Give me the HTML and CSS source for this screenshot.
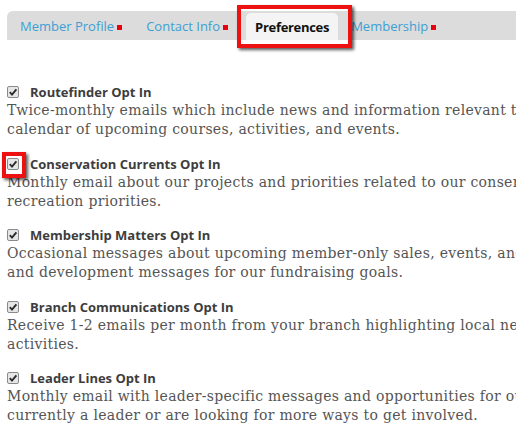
FILE: index.html
```html
<!DOCTYPE html>
<html>
<head>
<meta charset="utf-8">
<link rel="stylesheet" href="styles.css">
</head>
<body>
<div class="page">
  <nav class="tabs">
    <a class="tab tab-first">Member Profile<span class="req"></span></a>
    <a class="tab">Contact Info<span class="req"></span></a>
    <a class="tab tab-active">Preferences</a>
    <a class="tab tab-last">Membership<span class="req"></span></a>
  </nav>
  <div class="mark mark-tab"></div>

  <div class="prefs">
    <div class="pref">
      <div class="pref-head"><span class="cb"><svg viewBox="0 0 12 12" width="12" height="12"><rect x="0.5" y="0.5" width="11" height="11" rx="1.5" fill="#e6e6e6" stroke="#8a8a8a"/><path d="M2.8 6.2 L5 8.6 L9.4 3.4" fill="none" stroke="#2b2b2b" stroke-width="1.9"/></svg></span><span class="pref-title">Routefinder Opt In</span></div>
      <p class="pref-desc">Twice-monthly emails which include news and information relevant to you<br>calendar of upcoming courses, activities, and events.</p>
    </div>
    <div class="pref">
      <div class="pref-head"><span class="cb"><svg viewBox="0 0 12 12" width="12" height="12"><rect x="0.5" y="0.5" width="11" height="11" rx="1.5" fill="#e6e6e6" stroke="#8a8a8a"/><path d="M2.8 6.2 L5 8.6 L9.4 3.4" fill="none" stroke="#2b2b2b" stroke-width="1.9"/></svg><span class="mark mark-cb"></span></span><span class="pref-title">Conservation Currents Opt In</span></div>
      <p class="pref-desc">Monthly email about our projects and priorities related to our conservation<br>recreation priorities.</p>
    </div>
    <div class="pref">
      <div class="pref-head"><span class="cb"><svg viewBox="0 0 12 12" width="12" height="12"><rect x="0.5" y="0.5" width="11" height="11" rx="1.5" fill="#e6e6e6" stroke="#8a8a8a"/><path d="M2.8 6.2 L5 8.6 L9.4 3.4" fill="none" stroke="#2b2b2b" stroke-width="1.9"/></svg></span><span class="pref-title">Membership Matters Opt In</span></div>
      <p class="pref-desc">Occasional messages about upcoming member-only sales, events, and other<br>and development messages for our fundraising goals.</p>
    </div>
    <div class="pref">
      <div class="pref-head"><span class="cb"><svg viewBox="0 0 12 12" width="12" height="12"><rect x="0.5" y="0.5" width="11" height="11" rx="1.5" fill="#e6e6e6" stroke="#8a8a8a"/><path d="M2.8 6.2 L5 8.6 L9.4 3.4" fill="none" stroke="#2b2b2b" stroke-width="1.9"/></svg></span><span class="pref-title">Branch Communications Opt In</span></div>
      <p class="pref-desc">Receive 1-2 emails per month from your branch highlighting local news<br>activities.</p>
    </div>
    <div class="pref">
      <div class="pref-head"><span class="cb"><svg viewBox="0 0 12 12" width="12" height="12"><rect x="0.5" y="0.5" width="11" height="11" rx="1.5" fill="#e6e6e6" stroke="#8a8a8a"/><path d="M2.8 6.2 L5 8.6 L9.4 3.4" fill="none" stroke="#2b2b2b" stroke-width="1.9"/></svg></span><span class="pref-title">Leader Lines Opt In</span></div>
      <p class="pref-desc">Monthly email with leader-specific messages and opportunities for our<br>currently a leader or are looking for more ways to get involved.</p>
    </div>
  </div>
</div>
</body>
</html>
```
FILE: styles.css
```css
html, body {
  margin: 0;
  padding: 0;
  background: #fff;
}
body {
  overflow: hidden;
}
.page {
  position: relative;
  width: 509px;
  padding: 11px 0 0 7px;
}
.tabs {
  display: flex;
  align-items: stretch;
  height: 29px;
  background: #dcdcdc;
  border-top-left-radius: 6px;
  font-family: "Open Sans", "DejaVu Sans", sans-serif;
  font-size: 13px;
}
.tab {
  display: flex;
  align-items: center;
  padding: 0 12px;
  color: #3d9fd3;
  text-decoration: none;
  white-space: nowrap;
}
.tab-first { padding-left: 13px; }
.tab-active {
  margin: 2px 0 0 6px;
  padding: 0 9px;
  background: #f4f4f4;
  border-radius: 5px 5px 0 0;
  color: #111;
  font-weight: 700;
  letter-spacing: -0.3px;
}
.tab-last { padding-left: 13px; }
.req {
  display: inline-block;
  width: 5px;
  height: 5px;
  background: #e8000f;
  margin-left: 3px;
  margin-top: 3px;
}
.mark {
  position: absolute;
  border: 4px solid #ee1111;
  box-shadow: 2px 2px 3px rgba(0, 0, 0, 0.65);
  box-sizing: border-box;
}
.mark-tab {
  left: 237px;
  top: 5px;
  width: 115px;
  height: 43px;
}
.prefs {
  padding-top: 43px;
}
.pref {
  margin-bottom: 15.5px;
}
.pref-head {
  display: flex;
  align-items: center;
  height: 18px;
}
.cb {
  position: relative;
  display: inline-block;
  width: 12px;
  height: 12px;
  margin-right: 11px;
}
.cb svg { display: block; }
.mark-cb {
  left: -5px;
  top: -6px;
  width: 24px;
  height: 26px;
}
.pref-title {
  font-family: "Open Sans", "DejaVu Sans", sans-serif;
  font-weight: 700;
  font-size: 13px;
  color: #3d3d3d;
}
.pref-desc {
  margin: 0;
  font-family: "DejaVu Serif", serif;
  font-size: 14px;
  letter-spacing: 0.3px;
  line-height: 19px;
  color: #555;
  white-space: nowrap;
}
```
